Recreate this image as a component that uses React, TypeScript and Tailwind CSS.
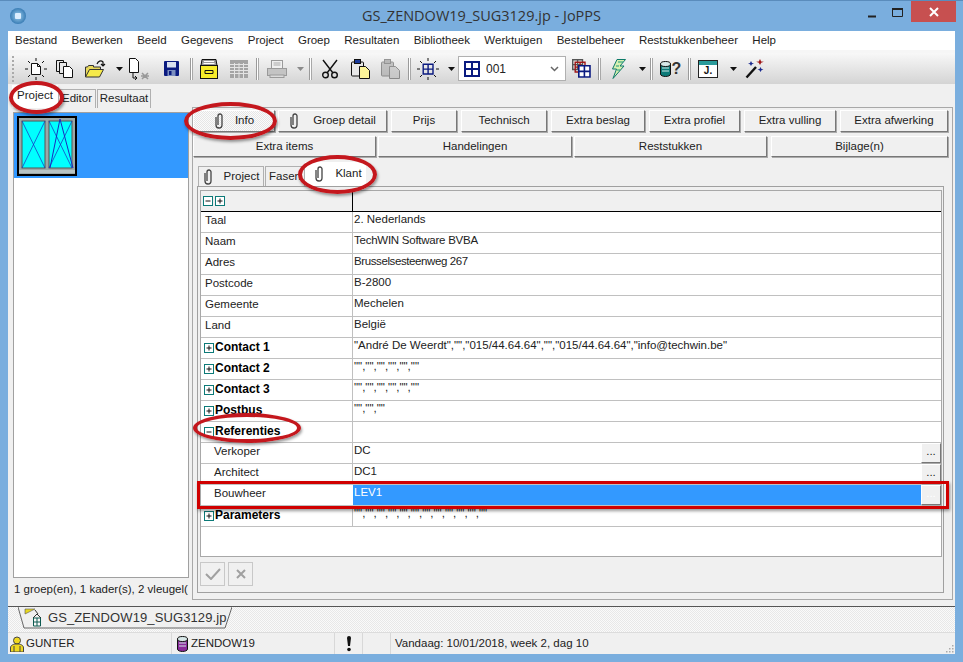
import React from 'react';

const menus = ['Bestand', 'Bewerken', 'Beeld', 'Gegevens', 'Project', 'Groep', 'Resultaten', 'Bibliotheek', 'Werktuigen', 'Bestelbeheer', 'Reststukkenbeheer', 'Help'];

const Clip = () => (
  <svg width="10" height="16" viewBox="0 0 10 16" fill="none" stroke="#444" strokeWidth="1.3">
    <path d="M2 4v8a3 3 0 0 0 6 0V3a2 2 0 0 0-4 0v9" />
  </svg>
);

const Arrow = () => (
  <svg width="7" height="4" viewBox="0 0 7 4"><path d="M0 0h7L3.5 4z" fill="#111" /></svg>
);

const GreyArrow = () => (
  <svg width="7" height="4" viewBox="0 0 7 4"><path d="M0 0h7L3.5 4z" fill="#8a8a8a" /></svg>
);

const Sep = ({ className = '' }: { className?: string }) => (
  <div className={`h-[22px] w-[3px] shrink-0 border-l border-r border-l-[#9a9a9a] border-r-[#a8a8a8] bg-white ${className}`} />
);

const Tool = ({ className, children }: { className: string; children?: React.ReactNode }) => (
  <div className={`flex h-full shrink-0 items-center justify-center ${className}`}>{children}</div>
);

const Rays = () => (
  <path d="M12 1v3M12 20v3M1 12h3M20 12h3M4 4l2 2M20 4l-2 2M4 20l2-2M20 20l-2-2" stroke="#111" strokeWidth="1" fill="none" />
);

const NewIcon = () => (
  <svg width="24" height="24" viewBox="0 0 24 24">
    <Rays />
    <path d="M7.5 6.500h6l3 3v8h-9z" fill="#fff" stroke="#111" />
    <path d="M13.5 6.500v3h3" fill="none" stroke="#111" />
  </svg>
);

const CopyIcon = () => (
  <svg width="20" height="20" viewBox="0 0 20 20" fill="#fff" stroke="#111">
    <path d="M1.5 1.5h7v11h-7z" fill="#e8e8e8" />
    <path d="M4.5 3.5h7v11h-7z" fill="#e8e8e8" />
    <path d="M8.5 7.5h6l3 3v8h-9z" />
  </svg>
);

const OpenIcon = () => (
  <svg width="24" height="20" viewBox="0 0 24 20">
    <path d="M1.5 18V8h2l1-1.5h5V8h7v2.5" fill="#e8d85a" stroke="#333" />
    <path d="M1.5 18l4-7.5h14l-4 7.5z" fill="#f6ea4a" stroke="#333" />
    <path d="M13 5c1-3 4-4 6-2v3m-2-1l2 2 2-2" fill="none" stroke="#111" strokeWidth="1.2" />
  </svg>
);

const ExportIcon = () => (
  <svg width="22" height="24" viewBox="0 0 22 24">
    <path d="M1.5 1.5h6l3 3v11h-9z" fill="#fff" stroke="#111" />
    <path d="M5 15v6h4m-2-2l2 2-2 2" fill="none" stroke="#111" />
    <path d="M14 16l3 3 3-3M14 22l3-3 3 3M13 19h8" fill="none" stroke="#999" strokeWidth="1.5" />
  </svg>
);

const SaveIcon = () => (
  <svg width="15" height="15" viewBox="0 0 15 15">
    <rect width="15" height="15" rx="1" fill="#0a1a80" />
    <rect x="3" y="1" width="9" height="5.5" fill="#d8e0f0" />
    <rect x="3.5" y="9" width="8" height="6" fill="#7c8fc0" />
    <rect x="5" y="10" width="2.5" height="4" fill="#0a1a80" />
  </svg>
);

const BoxIcon = () => (
  <svg width="18" height="20" viewBox="0 0 18 20">
    <path d="M2 .5h14l1 6H1z" fill="#999" stroke="#111" />
    <path d="M4 2.5h10M3.5 4.5h11" stroke="#fff" />
    <rect x=".5" y="6.5" width="17" height="13" fill="#f6ec2a" stroke="#111" />
    <path d="M5 11.5h8v3H5z" fill="none" stroke="#111" />
  </svg>
);

const TableIcon = () => (
  <svg width="18" height="18" viewBox="0 0 18 18">
    <rect width="18" height="18" fill="#a4a4a4" />
    <path d="M0 4.5h18M0 7.5h18M0 10.5h18M0 13.5h18M4.5 3v15M9 3v15M13.5 3v15" stroke="#e4e4e4" />
  </svg>
);

const PrinterIcon = () => (
  <svg width="20" height="18" viewBox="0 0 20 18">
    <rect x="4.5" y=".5" width="11" height="8" fill="#f0f0f0" stroke="#9a9a9a" />
    <path d="M6.5 3h7M6.5 5h7" stroke="#aaa" />
    <rect x=".5" y="8.5" width="19" height="7" fill="#c4c4c4" stroke="#9a9a9a" />
    <rect x="3" y="15" width="14" height="2.5" fill="#dcdcdc" stroke="#9a9a9a" />
  </svg>
);

const ScissorsIcon = () => (
  <svg width="18" height="20" viewBox="0 0 18 20" fill="none" stroke="#111" strokeWidth="1.4">
    <path d="M2 1l10 13M16 1L6 14" />
    <circle cx="4.5" cy="16" r="2.8" />
    <circle cx="13.5" cy="16" r="2.8" />
  </svg>
);

const PasteIcon = ({ grey }: { grey?: boolean }) => (
  <svg width="19" height="20" viewBox="0 0 19 20" opacity={grey ? 0.4 : 1}>
    <rect x=".5" y="3" width="12" height="14" rx="1" fill={grey ? '#888' : '#e8e8e8'} stroke="#111" />
    <rect x="3.5" y=".5" width="6" height="4" fill={grey ? '#666' : '#1a3a9a'} stroke="#111" />
    <path d="M8.5 7.5h6l4 4v8h-10z" fill={grey ? '#aaa' : '#fdf59a'} stroke="#111" />
  </svg>
);

const GridGlyph = ({ color = '#0a1a80' }: { color?: string }) => (
  <path d="M1 1h14v14H1zM8 1v14M1 8h14" fill="none" stroke={color} strokeWidth="2" />
);

const GridRayIcon = () => (
  <svg width="24" height="24" viewBox="0 0 24 24">
    <Rays />
    <g transform="translate(6.5 6.5) scale(.7)"><GridGlyph /></g>
  </svg>
);

const StackIcon = () => (
  <svg width="19" height="19" viewBox="0 0 19 19">
    <g transform="scale(.7)"><GridGlyph color="#555" /></g>
    <g transform="translate(2.5 2.5) scale(.7)"><GridGlyph color="#a01818" /></g>
    <rect x="6" y="6" width="12.5" height="12.5" fill="#fff" />
    <g transform="translate(6 6) scale(.8)"><GridGlyph /></g>
  </svg>
);

const BoltIcon = () => (
  <svg width="15" height="20" viewBox="0 0 15 20">
    <path d="M6 .5h8.5L9 7h4L2 19.5 5.5 10H1.5z" fill="#d8f0b0" stroke="#0c7a68" />
    <path d="M7 3h5M5 7h3M6 11h3" stroke="#1a9a80" />
  </svg>
);

const DbIcon = ({ fill = '#0c7a78' }: { fill?: string }) => (
  <svg width="11" height="16" viewBox="0 0 11 16">
    <path d="M.5 3v10c0 3.3 10 3.3 10 0V3" fill={fill} stroke="#111" />
    <ellipse cx="5.5" cy="3" rx="5" ry="2.5" fill="#d8e8e8" stroke="#111" />
    <path d="M2 7h7M2 10h7" stroke="#d0e8e8" />
  </svg>
);

const WandIcon = () => (
  <svg width="20" height="20" viewBox="0 0 20 20">
    <path d="M1.5 18.5L11 8" stroke="#111" strokeWidth="2.4" />
    <path d="M6 2l1 2 2 .5-2 .8L6 7l-1-1.7-2-.6 2-.7z" fill="#1a2a90" />
    <path d="M15 0l1.2 2.4 2.6.4-2.6 1L15 6l-1.2-2.2-2.6-1 2.6-.4z" fill="#a01818" />
    <path d="M15.5 8l1 2 2 .5-2 .7-1 1.8-1-1.8-2-.7 2-.5z" fill="#1a2a90" />
  </svg>
);

const SmallBox = ({ minus }: { minus?: boolean }) => (
  <svg width="10" height="10" viewBox="0 0 10 10" className="shrink-0">
    <rect x=".5" y=".5" width="9" height="9" fill="#fff" stroke="#0c7a78" />
    <path d={minus ? 'M2.5 5h5' : 'M2.5 5h5M5 2.5v5'} stroke="#111" />
  </svg>
);

const Btn = ({ className, children, pressed }: { className: string; children: React.ReactNode; pressed?: boolean }) => (
  <div
    className={`flex shrink-0 items-center justify-center border border-t-white border-l-white border-r-[#777] border-b-[#777] shadow-[1px_1px_0_#aaa] ${pressed ? 'bg-[repeating-conic-gradient(#e6e6e6_0_25%,#fbfbfb_0_50%)] bg-[length:2px_2px]' : 'bg-[#f0f0f0]'} ${className}`}
  >
    {children}
  </div>
);

type RowData = { label: string; value?: string; bold?: boolean; open?: boolean; indent?: boolean; more?: boolean; tight?: string };

const rows: RowData[] = [
  { label: 'Taal', value: '2. Nederlands' },
  { label: 'Naam', value: 'TechWIN Software BVBA', tight: 'tracking-[-0.25px]' },
  { label: 'Adres', value: 'Brusselsesteenweg 267', tight: 'tracking-[-0.4px]' },
  { label: 'Postcode', value: 'B-2800' },
  { label: 'Gemeente', value: 'Mechelen' },
  { label: 'Land', value: 'België' },
  { label: 'Contact 1', bold: true, value: '"André De Weerdt","","015/44.64.64","","015/44.64.64","info@techwin.be"' },
  { label: 'Contact 2', bold: true, value: '"","","","","",""' },
  { label: 'Contact 3', bold: true, value: '"","","","","",""' },
  { label: 'Postbus', bold: true, value: '"","",""' },
  { label: 'Referenties', bold: true, open: true },
  { label: 'Verkoper', value: 'DC', indent: true, more: true },
  { label: 'Architect', value: 'DC1', indent: true, more: true },
];

const GridRow = ({ r }: { r: RowData }) => (
  <div className="flex h-[21px] shrink-0 border-b border-[#c0c0c0] bg-white">
    <div className={`flex w-[152px] shrink-0 items-center border-r border-[#c0c0c0] ${r.bold ? 'pl-[3px]' : r.indent ? 'pl-[13px]' : 'pl-[4px]'}`}>
      {r.bold && <SmallBox minus={r.open} />}
      <span className={r.bold ? 'ml-[1px] pb-[3px] text-[12px] font-bold text-black' : 'pb-[2px] text-[#222]'}>{r.label}</span>
    </div>
    <div className={`min-w-0 flex-1 overflow-hidden whitespace-nowrap pl-[1px] leading-[14px] text-[#222] ${r.tight ?? ''}`}>{r.value}</div>
    {r.more && (
      <Btn className="h-[20px] w-[20px] pb-[3px] text-[#222]">...</Btn>
    )}
  </div>
);

export default function App() {
  return (
    <div className="relative flex h-[662px] w-[963px] flex-col overflow-hidden bg-[#7aaede] font-['Liberation_Sans',Arial,sans-serif] text-[11.5px] text-[#222]">
      {/* title bar */}
      <div className="relative flex h-[31px] shrink-0 items-center border-t border-[#5a8cbc]">
        <div className="ml-[10px] flex h-[16px] w-[16px] items-center justify-center rounded-full bg-[radial-gradient(circle,#9fd0f0,#0f5a9c)]">
          <div className="h-[6px] w-[6px] rounded-[1px] bg-[#dceeff]" />
        </div>
        <div className="flex-1 pl-[71px] text-center font-['Open_Sans',sans-serif] text-[14.5px] text-[#333]">GS_ZENDOW19_SUG3129.jp - JoPPS</div>
        <div className="mr-[7px] flex h-[21px] items-start self-start">
          <svg width="14" height="14" viewBox="0 0 14 14" className="mr-[11px] mt-[5px]"><path d="M2 10.5h8" stroke="#222" strokeWidth="2" /></svg>
          <svg width="14" height="12" viewBox="0 0 14 12" className="mr-[6px] mt-[6px]"><path d="M1.5 1.5h10v8h-10z" fill="none" stroke="#222" /><path d="M1 2h11" stroke="#222" strokeWidth="2" /></svg>
          <div className="flex h-[21px] w-[45px] items-center justify-center bg-[#c75050]">
            <svg width="10" height="10" viewBox="0 0 10 10"><path d="M1 1l8 8M9 1l-8 8" stroke="#fff" strokeWidth="2" /></svg>
          </div>
        </div>
      </div>

      {/* client area */}
      <div className="mx-[8px] mb-[8px] flex min-h-0 flex-1 flex-col bg-[#f0f0f0]">
        <div className="flex h-[19px] shrink-0 items-center gap-[14.4px] bg-white pl-[7px]">
          {menus.map((m) => <span key={m}>{m}</span>)}
        </div>
        <div className="h-[3px] shrink-0 bg-[#f6f6f6]" />

        {/* toolbar */}
        <div className="flex h-[31px] shrink-0 items-center bg-gradient-to-b from-[#f8f8f8] to-[#d4d4d4]">
          <div className="ml-[4px] mr-[8px] h-[26px] w-[2px] border-l-2 border-dotted border-[#aaa]" />
          <Tool className="w-[28px]"><NewIcon /></Tool>
          <Tool className="w-[30px]"><CopyIcon /></Tool>
          <Tool className="w-[32px]"><OpenIcon /></Tool>
          <Tool className="w-[14px]"><Arrow /></Tool>
          <Tool className="w-[26px]"><ExportIcon /></Tool>
          <Tool className="w-[38px]"><SaveIcon /></Tool>
          <Sep />
          <Tool className="w-[32px]"><BoxIcon /></Tool>
          <Tool className="w-[28px]"><TableIcon /></Tool>
          <Sep className="ml-[3px]" />
          <Tool className="w-[36px]"><PrinterIcon /></Tool>
          <Tool className="w-[10px]"><GreyArrow /></Tool>
          <Sep className="ml-[4px]" />
          <Tool className="w-[35px]"><ScissorsIcon /></Tool>
          <Tool className="w-[26px]"><PasteIcon /></Tool>
          <Tool className="w-[34px]"><PasteIcon grey /></Tool>
          <Sep className="ml-[1px]" />
          <Tool className="w-[34px]"><GridRayIcon /></Tool>
          <Tool className="w-[12px]"><Arrow /></Tool>
          <div className="ml-[1px] flex h-[25px] w-[108px] shrink-0 items-center border border-[#b0b0b0] bg-white pl-[5px] pr-[4px] text-[12px]">
            <svg width="16" height="16" viewBox="0 0 16 16"><GridGlyph /></svg>
            <span className="ml-[6px] flex-1">001</span>
            <svg width="9" height="6" viewBox="0 0 9 6" fill="none" stroke="#666" strokeWidth="1.5" className="mr-[2px]"><path d="M1 1l3.5 3.5L8 1" /></svg>
          </div>
          <Tool className="w-[30px]"><StackIcon /></Tool>
          <Sep className="ml-[2px]" />
          <Tool className="w-[34px]"><BoltIcon /></Tool>
          <Tool className="w-[14px]"><Arrow /></Tool>
          <Sep className="ml-[1px]" />
          <Tool className="w-[35px]">
            <DbIcon />
            <span className="ml-[1px] text-[16px] font-bold leading-none text-[#333]">?</span>
          </Tool>
          <Sep />
          <Tool className="w-[34px]">
            <div className="flex h-[18px] w-[20px] flex-col border border-[#222] bg-white">
              <div className="h-[4px] bg-[#2a9a9a]" />
              <div className="flex-1 text-center text-[10px] font-bold leading-[12px] text-[#111]">J.</div>
            </div>
          </Tool>
          <Tool className="w-[16px]"><Arrow /></Tool>
          <Tool className="w-[28px]"><WandIcon /></Tool>
        </div>

        {/* main */}
        <div className="flex min-h-0 flex-1">
          <div className="flex w-[184px] shrink-0 flex-col">
            <div className="flex h-[24px] shrink-0 items-end pl-[4px]">
              <div className="flex h-[23px] w-[46px] items-center justify-center bg-white pb-[1px]">Project</div>
              <div className="flex h-[19px] w-[38px] items-center justify-center border border-b-0 border-[#b0b0b0]">Editor</div>
              <div className="ml-[1px] flex h-[19px] w-[54px] items-center justify-center border border-b-0 border-[#b0b0b0]">Resultaat</div>
            </div>
            <div className="ml-[5px] mr-[3px] mt-[4px] h-[466px] shrink-0 border border-[#a0a0a0] bg-white">
              <div className="flex h-[65px] items-center bg-[#3399ff] pl-[3px]">
                <svg width="60" height="60" viewBox="0 0 60 60">
                  <rect width="60" height="60" fill="#000" />
                  <rect x="2" y="2" width="56" height="56" fill="#9aa8a8" />
                  <rect x="5" y="5" width="23" height="47" fill="#00ffff" stroke="#555" />
                  <rect x="32" y="5" width="23" height="47" fill="#00ffff" stroke="#555" />
                  <path d="M5 5l23 47M28 5L5 52M32 5l23 47M55 5L32 52" stroke="#1a2ac0" strokeWidth=".7" fill="none" />
                  <path d="M33 52L43 3l13 49" stroke="#1a2ac0" strokeWidth="1" fill="none" />
                  <rect x="2" y="54" width="56" height="3" fill="#b8c4c4" />
                </svg>
              </div>
            </div>
            <div className="ml-[6px] whitespace-nowrap pt-[4px] leading-[15px]">1 groep(en), 1 kader(s), 2 vleugel(</div>
          </div>

          <div className="mt-[23px] flex h-[493px] w-[761px] shrink-0 flex-col border border-[#a8a8a8]">
            <div className="flex h-[24px] shrink-0 pt-[2px]">
              <Btn className="h-[22px] w-[82px] gap-[11px]" pressed><Clip /><span>Info</span></Btn>
              <Btn className="ml-[3px] h-[22px] w-[109px] gap-[14px]"><Clip /><span>Groep detail</span></Btn>
              <Btn className="ml-[4px] h-[22px] w-[66px]">Prijs</Btn>
              <Btn className="ml-[4px] h-[22px] w-[86px]">Technisch</Btn>
              <Btn className="ml-[4px] h-[22px] w-[94px]">Extra beslag</Btn>
              <Btn className="ml-[4px] h-[22px] w-[91px]">Extra profiel</Btn>
              <Btn className="ml-[4px] h-[22px] w-[92px]">Extra vulling</Btn>
              <Btn className="ml-[4px] h-[22px] w-[108px]">Extra afwerking</Btn>
            </div>
            <div className="mt-[4px] flex h-[21px] shrink-0">
              <Btn className="h-[21px] w-[183px]">Extra items</Btn>
              <Btn className="ml-[2px] h-[21px] w-[194px]">Handelingen</Btn>
              <Btn className="ml-[2px] h-[21px] w-[193px]">Reststukken</Btn>
              <Btn className="ml-[4px] h-[21px] w-[177px]">Bijlage(n)</Btn>
            </div>
            <div className="ml-[5px] mt-[5px] flex h-[24px] shrink-0 items-end">
              <div className="flex h-[20px] w-[66px] items-center justify-center gap-[11px] border border-b-0 border-[#b0b0b0]"><Clip /><span>Project</span></div>
              <div className="ml-[1px] flex h-[20px] w-[40px] items-center justify-center border border-b-0 border-[#b0b0b0]">Fasen</div>
              <div className="flex h-[24px] w-[61px] items-center justify-center gap-[11px] bg-white pl-[5px]"><Clip /><span>Klant</span></div>
            </div>

            <div className="ml-[4px] flex h-[407px] w-[747px] shrink-0 flex-col border border-[#a0a0a0] pl-[2px] pt-[3px]">
              <div className="flex h-[367px] w-[742px] shrink-0 flex-col border border-[#a8a8a8] bg-white">
                <div className="flex h-[21px] shrink-0 border-b border-black bg-[#f0f0f0]">
                  <div className="flex w-[152px] items-center gap-[2px] border-r border-black pl-[2px]">
                    <SmallBox minus />
                    <SmallBox />
                  </div>
                </div>
                {rows.map((r) => <GridRow key={r.label} r={r} />)}
                <div className="flex h-[21px] shrink-0 border-b border-[#c0c0c0]">
                  <div className="flex w-[152px] shrink-0 items-center pl-[13px]"><span className="pb-[2px]">Bouwheer</span></div>
                  <div className="flex-1 bg-[#3399ff] pl-[1px] leading-[14px] text-white">LEV1</div>
                  <Btn className="h-[20px] w-[20px] pb-[3px] text-white">...</Btn>
                </div>
                <GridRow r={{ label: 'Parameters', bold: true, value: '"","","","","","","","","","","",""' }} />
              </div>
              <div className="mt-[5px] flex gap-[3px]">
                <div className="flex h-[24px] w-[25px] items-center justify-center border border-[#c8c8c8]">
                  <svg width="16" height="12" viewBox="0 0 16 12" fill="none" stroke="#a0a0a0" strokeWidth="2"><path d="M1 6l5 5 9-10" /></svg>
                </div>
                <div className="flex h-[24px] w-[25px] items-center justify-center border border-[#c8c8c8]">
                  <svg width="10" height="10" viewBox="0 0 10 10" fill="none" stroke="#a0a0a0" strokeWidth="2"><path d="M1 1l8 8M9 1l-8 8" /></svg>
                </div>
              </div>
            </div>
          </div>
        </div>

        {/* document tabs */}
        <div className="h-[7px] shrink-0 border-b border-[#555]" />
        <div className="flex h-[25px] shrink-0 bg-[repeating-conic-gradient(#e8e8e8_0_25%,#fafafa_0_50%)] bg-[length:2px_2px] pl-[10px]">
          <div className="relative flex h-[22px] w-[214px] items-center pl-[6px]">
            <svg width="214" height="22" viewBox="0 0 214 22" className="absolute left-0 top-0">
              <path d="M0 0l6 21h201l7-21" fill="#f0f0f0" stroke="#666" />
            </svg>
            <svg width="20" height="20" viewBox="0 0 20 20" className="relative">
              <path d="M1 1h10L1 6z" fill="#e8d820" stroke="#555" strokeWidth=".6" />
              <path d="M11 2l3 4" stroke="#333" />
              <path d="M9 10l4-4 4 4" fill="none" stroke="#333" />
              <path d="M9.5 10h7v8h-7zM13 10v8M9.5 14h7" fill="#f8f8f8" stroke="#0c5a50" />
            </svg>
            <span className="relative ml-[4px] text-[13px] tracking-[0.1px] text-[#333]">GS_ZENDOW19_SUG3129.jp</span>
          </div>
        </div>

        {/* status bar */}
        <div className="flex h-[22px] shrink-0 items-center border-t border-[#dcdcdc]">
          <div className="flex h-full w-[164px] items-center border-r border-[#d8d8d8] pl-[2px]">
            <svg width="14" height="16" viewBox="0 0 14 16">
              <circle cx="7" cy="4.5" r="3.5" fill="#f0d820" stroke="#444" />
              <path d="M.5 16v-4c0-3 3-4 6.500-4s6.500 1 6.500 4v4z" fill="#f0d820" stroke="#444" />
              <path d="M4 10v6M10 10v6" stroke="#444" />
            </svg>
            <span className="ml-[2px]">GUNTER</span>
          </div>
          <div className="flex h-full w-[163px] items-center border-r border-[#d8d8d8] pl-[5px]">
            <DbIcon fill="#8a2a9a" />
            <span className="ml-[3px]">ZENDOW19</span>
          </div>
          <div className="flex h-full w-[28px] items-center justify-center border-r border-[#d8d8d8]">
            <svg width="6" height="16" viewBox="0 0 6 16"><path d="M1 2a2 2 0 0 1 4 0l-1 8H2z" fill="#111" /><circle cx="3" cy="13.500" r="1.800" fill="#111" /></svg>
          </div>
          <div className="h-full w-[28px] border-r border-[#d8d8d8]" />
          <div className="ml-[4px] flex-1">Vandaag: 10/01/2018, week 2, dag 10</div>
          <svg width="10" height="10" viewBox="0 0 10 10" className="mr-[1px] mt-[8px]">
            <path d="M8 2h1.500v1.500H8zM5 5h1.500v1.500H5zM8 5h1.500v1.500H8zM2 8h1.500v1.500H2zM5 8h1.500v1.500H5zM8 8h1.500v1.500H8z" fill="#aaa" />
          </svg>
        </div>
      </div>

      {/* red annotations on top of the screenshot */}
      <div className="absolute left-[9px] top-[81px] h-[33px] w-[55px] rounded-[50%] border-4 border-[#c4171d] shadow-[1px_2px_3px_rgba(0,0,0,0.4)]" />
      <div className="absolute left-[184px] top-[102px] h-[38px] w-[93px] rounded-[50%] border-4 border-[#c4171d] shadow-[1px_2px_3px_rgba(0,0,0,0.4)]" />
      <div className="absolute left-[298px] top-[155px] h-[39px] w-[79px] rounded-[50%] border-4 border-[#c4171d] shadow-[1px_2px_3px_rgba(0,0,0,0.4)]" />
      <div className="absolute left-[193px] top-[413px] h-[30px] w-[108px] rounded-[50%] border-4 border-[#c4171d] shadow-[1px_2px_3px_rgba(0,0,0,0.4)]" />
      <div className="absolute left-[197px] top-[481px] h-[28px] w-[752px] border-[3px] border-[#d00000] shadow-[1px_2px_3px_rgba(0,0,0,0.4)]" />
    </div>
  );
}
